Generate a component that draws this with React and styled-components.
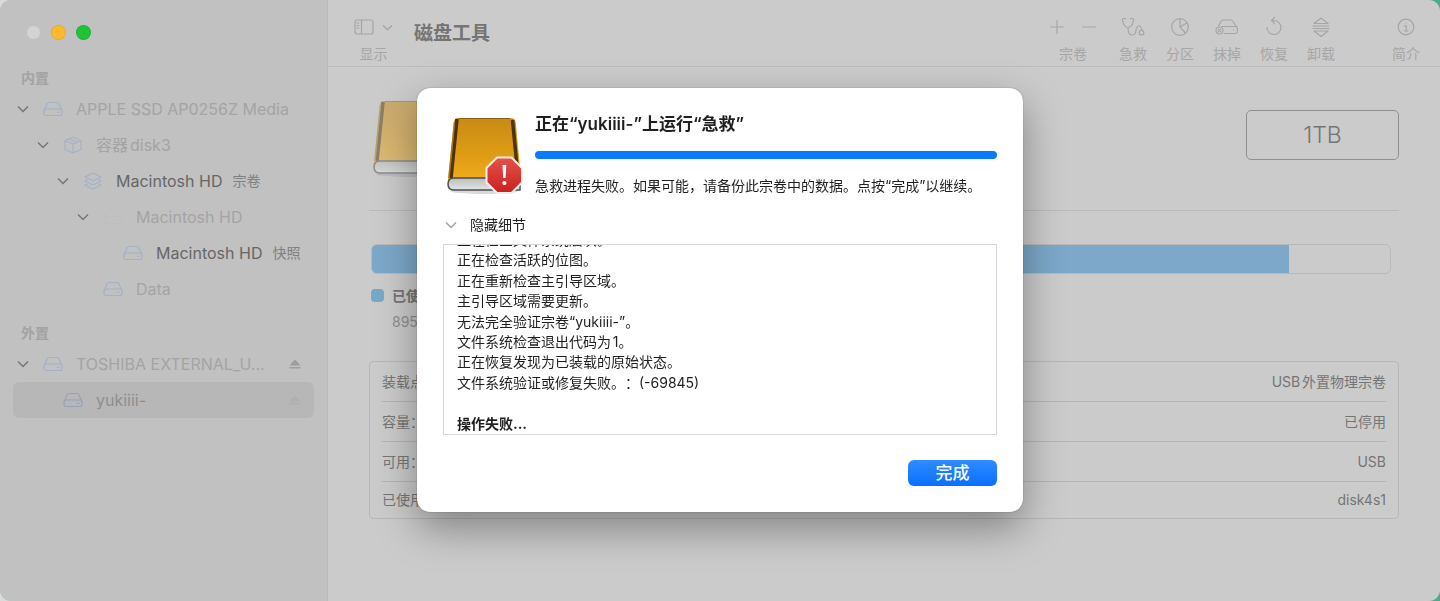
import React from "react";
import styled, { createGlobalStyle } from "styled-components";

const GlobalStyle = createGlobalStyle`
  * {
    box-sizing: border-box;
  }
  body {
    margin: 0;
    background: linear-gradient(90deg, #d9dcda 0%, #4fa98a 60%);
    font-family: Inter, "Noto Sans CJK SC", sans-serif;
    font-size: 14px;
    line-height: 20px;
    text-autospace: normal;
    text-spacing-trim: space-all;
  }
  button {
    padding: 0;
    border: none;
    background: none;
    color: inherit;
    font: inherit;
  }
  ul {
    margin: 0;
    padding: 0;
    list-style: none;
  }
  svg {
    display: block;
    flex: none;
  }
`;

const Window = styled.div`
  display: flex;
  min-height: 100vh;
  border-radius: 11px;
  overflow: hidden;
  background: #cbcbcb;
`;

const Line = styled.svg`
  fill: none;
  stroke: currentColor;
  stroke-width: ${({ $weight }) => $weight || 1.2};
  stroke-linecap: round;
  stroke-linejoin: round;
`;

/* sidebar */

const SidebarBox = styled.aside`
  flex: none;
  width: 328px;
  padding: 25px 13px;
  background: #c1c1c1;
  border-right: 1px solid #b9b9b9;
`;

const Lights = styled.div`
  display: flex;
  gap: 10px;
  padding-left: 13px;
  margin-bottom: 25px;
`;

const Light = styled.button`
  width: 15px;
  height: 15px;
  border-radius: 50%;
  border: 1px solid rgba(0, 0, 0, 0.08);
  background: ${({ $color }) => $color};
`;

const Section = styled.section`
  margin-bottom: 13px;
  h2 {
    margin: 0;
    padding-left: 8px;
    font-size: 14px;
    font-weight: 600;
    line-height: 26px;
    color: #a3a3a3;
  }
`;

const Row = styled.li`
  display: flex;
  align-items: center;
  height: 36px;
  padding-left: ${({ $level }) => 4 + $level * 20}px;
  padding-right: 13px;
  border-radius: 6px;
  background: ${({ $selected }) => ($selected ? "#b7b7b7" : "none")};
  color: ${({ $active, $selected }) =>
    $active ? "#666666" : $selected ? "#8e8e8e" : "#a4a4a4"};
  font-size: 16px;
  white-space: nowrap;

  .toggle {
    width: 12px;
    height: 12px;
    margin-right: 14px;
    color: #7c7c7c;
  }
  .icon {
    width: 20px;
    margin-right: 13px;
    color: ${({ $selected }) => ($selected ? "#94a3b8" : "#a3b2c7")};
  }
  .faint {
    opacity: 0.15;
  }
  .name {
    overflow: hidden;
    text-overflow: ellipsis;
  }
  .kind {
    margin-left: 10px;
    font-size: 14px;
    color: #808080;
  }
  .eject {
    margin-left: auto;
    color: ${({ $selected }) => ($selected ? "#b0b0b0" : "#9d9d9d")};
  }
`;

const Chevron = () => (
  <Line width="12" height="12" viewBox="0 0 12 12" $weight={1.7}>
    <path d="M1.5 4 6 8.5 10.5 4" />
  </Line>
);

const DriveIcon = () => (
  <Line width="20" height="16" viewBox="0 0 20 16">
    <path d="M1.3 9.500 4 3Q4.600 1.500 6 1.500h8q1.400 0 2 1.500l2.700 6.500" />
    <rect x="1" y="8" width="18" height="6.500" rx="2" />
    <path d="M14.500 11.300h1.500" />
  </Line>
);

const ContainerIcon = () => (
  <Line width="20" height="18" viewBox="0 0 20 18">
    <path d="M10 1 18 4.500v9L10 17 2 13.500v-9zM2 4.500 10 8l8-3.500M10 8v9M6 2.800l8 3.500" />
  </Line>
);

const StackIcon = () => (
  <Line width="20" height="18" viewBox="0 0 20 18">
    <path d="M10 1l8 4-8 4-8-4zM4 8 2 9l8 4 8-4-2-1M4 12l-2 1 8 4 8-4-2-1" />
  </Line>
);

const EjectIcon = () => (
  <svg width="12" height="12" viewBox="0 0 12 12" fill="currentColor">
    <path d="M6 1.500 11.500 7.500H.5zM.5 9h11v1.500H.5z" />
  </svg>
);

const icons = {
  drive: DriveIcon,
  container: ContainerIcon,
  stack: StackIcon,
};

const internal = [
  { name: "APPLE SSD AP0256Z Media", level: 0, icon: "drive", open: true },
  { name: "容器disk3", level: 1, icon: "container", open: true },
  { name: "Macintosh HD", kind: "宗卷", level: 2, icon: "stack", open: true, active: true },
  { name: "Macintosh HD", level: 3, icon: "drive", open: true, faint: true },
  { name: "Macintosh HD", kind: "快照", level: 4, icon: "drive", active: true },
  { name: "Data", level: 3, icon: "drive" },
];

const external = [
  { name: "TOSHIBA EXTERNAL_U...", level: 0, icon: "drive", open: true, eject: true },
  { name: "yukiiii-", level: 1, icon: "drive", eject: true, selected: true },
];

const Tree = ({ title, items }) => (
  <Section>
    <h2>{title}</h2>
    <ul>
      {items.map((item, i) => {
        const Icon = icons[item.icon];
        return (
          <Row
            key={i}
            $level={item.level}
            $active={item.active}
            $selected={item.selected}
          >
            {item.open ? (
              <button className="toggle" aria-label="折叠">
                <Chevron />
              </button>
            ) : (
              <span className="toggle" />
            )}
            <span className={item.faint ? "icon faint" : "icon"}>
              <Icon />
            </span>
            <span className="name">{item.name}</span>
            {item.kind && <span className="kind">{item.kind}</span>}
            {item.eject && (
              <button className="eject" aria-label="推出">
                <EjectIcon />
              </button>
            )}
          </Row>
        );
      })}
    </ul>
  </Section>
);

const Sidebar = () => (
  <SidebarBox>
    <Lights>
      <Light $color="#d2d4d4" aria-label="关闭" />
      <Light $color="#fdbb2c" aria-label="最小化" />
      <Light $color="#20c338" aria-label="缩放" />
    </Lights>
    <Tree title="内置" items={internal} />
    <Tree title="外置" items={external} />
  </SidebarBox>
);

/* toolbar */

const ToolbarBox = styled.header`
  display: flex;
  height: 67px;
  padding: 15px 20px 0 26px;
  border-bottom: 1px solid #bcbcbc;
  color: #a6a6a6;

  h1 {
    margin: 0 auto 0 21px;
    font-size: 19px;
    font-weight: 700;
    line-height: 38px;
    color: #747474;
  }
`;

const Tool = styled.div`
  display: flex;
  flex-direction: column;
  align-items: center;
  width: ${({ $wide }) => ($wide ? 54 : 28)}px;
  line-height: 18px;
  white-space: nowrap;

  .glyphs {
    display: flex;
    align-items: center;
    justify-content: center;
    gap: 16px;
    height: 24px;
    margin-bottom: 6px;
  }
`;

const ViewTool = styled(Tool)`
  width: 39px;
  .glyphs {
    gap: 8px;
  }
`;

const Tools = styled.div`
  display: flex;
  gap: 19px;
`;

const Info = styled.div`
  margin-left: 38px;
`;

const ToolButton = ({ label, children }) => (
  <Tool as="button">
    <span className="glyphs">
      <Line width="24" height="24" viewBox="0 0 24 24">
        {children}
      </Line>
    </span>
    {label}
  </Tool>
);

const Toolbar = () => (
  <ToolbarBox>
    <ViewTool as="button">
      <span className="glyphs">
        <Line width="20" height="16" viewBox="0 0 20 16">
          <rect x="1" y="1" width="18" height="14" rx="2" />
          <path d="M7.500 1v14M3 4h2M3 6.500h2M3 9h2" />
        </Line>
        <Line width="11" height="11" viewBox="0 0 12 12" $weight={1.5}>
          <path d="M1.500 4 6 8.500 10.500 4" />
        </Line>
      </span>
      显示
    </ViewTool>
    <h1>磁盘工具</h1>
    <Tools>
      <Tool $wide>
        <span className="glyphs">
          <button aria-label="添加宗卷">
            <Line width="16" height="16" viewBox="0 0 16 16">
              <path d="M8 1.500v13M1.500 8h13" />
            </Line>
          </button>
          <button aria-label="删除宗卷">
            <Line width="16" height="16" viewBox="0 0 16 16">
              <path d="M1.500 8h13" />
            </Line>
          </button>
        </span>
        宗卷
      </Tool>
      <ToolButton label="急救">
        <path d="M4.500 3.500H2.500q-1 0-.8 2Q2.500 12 7 12.500q4.500-.5 5.300-7 .2-2-.8-2h-2M7 12.500Q7 20 11 20q3.500 0 4-4.500t3-4.500q2.500 0 2.500 4.300" />
        <circle cx="20.500" cy="17.700" r="2.300" />
      </ToolButton>
      <ToolButton label="分区">
        <circle cx="12" cy="12" r="8.300" />
        <path d="M12 3.700V12l7-4.300M12 12l5.500 6" />
      </ToolButton>
      <ToolButton label="抹掉">
        <path d="M3.500 11 6 6.500Q6.800 5 8.500 5h7q1.700 0 2.500 1.500L21.500 12M7 11.500h13q2.500 0 2.500 3.500T20 18.500H9.500" />
        <circle cx="4.500" cy="15.500" r="3.500" />
        <path d="m3.200 14.200 2.600 2.600m0-2.600-2.600 2.600M18.500 15h.2" />
      </ToolButton>
      <ToolButton label="恢复">
        <path d="M5 12.500A7 7 0 1 0 12 5.500H9.500M12.500 2.500l-3 3 3 3" />
      </ToolButton>
      <ToolButton label="卸载">
        <path d="M12 3 19 8.500H5zM4 11h16M4 13.500h16M5 16h14l-7 5.500z" />
      </ToolButton>
      <Info>
        <ToolButton label="简介">
          <circle cx="12" cy="12" r="7.800" />
          <path d="M10.500 10.800H12.200V16M10.300 16h3.800M12 8h.1" />
        </ToolButton>
      </Info>
    </Tools>
  </ToolbarBox>
);

/* volume details */

const Main = styled.main`
  flex: 1;
  min-width: 0;
  color: #757575;
`;

const Content = styled.div`
  padding: 32px 41px 0;
`;

const Summary = styled.div`
  display: flex;
  align-items: flex-start;
  justify-content: space-between;
  height: 112px;
  padding-left: 4px;
  border-bottom: 1px solid #bababa;

  .drive {
    opacity: 0.5;
  }
`;

const Capacity = styled.div`
  width: 153px;
  margin-top: 11px;
  border: 1px solid #909090;
  border-radius: 5px;
  font-size: 23px;
  font-weight: 300;
  line-height: 48px;
  text-align: center;
`;

const Usage = styled.div`
  height: 30px;
  margin: 33px 8px 0 2px;
  border: 1px solid #b9b9b9;
  border-radius: 6px;
  background: linear-gradient(#7da8c9, #7da8c9) no-repeat border-box;
  background-size: 90% 100%;
`;

const Legend = styled.div`
  display: flex;
  gap: 8px;
  margin: 12px 0 29px 2px;

  .swatch {
    width: 13px;
    height: 13px;
    margin-top: 3px;
    border-radius: 4px;
    background: #75a9c6;
  }
  strong {
    display: block;
    margin-bottom: 6px;
    font-weight: 600;
  }
  span {
    color: #8f8f8f;
  }
`;

const Details = styled.div`
  padding: 0 12px;
  border: 1px solid #b7b7b7;
  border-radius: 4px;

  table {
    width: 100%;
    border-collapse: separate;
    border-spacing: 0;
  }
  th,
  td {
    height: 40px;
    padding: 0;
    border-bottom: 1px solid #b5b5b5;
    font-weight: 400;
    text-align: left;
  }
  td {
    text-align: right;
  }
  tr:last-child > * {
    height: 36px;
    border-bottom: none;
  }
`;

const details = [
  ["装载点：", "USB外置物理宗卷"],
  ["容量：", "已停用"],
  ["可用：", "USB"],
  ["已使用：", "disk4s1"],
];

/* external disk in a book-like case, seen slightly from above */
const DiskArt = ({ alert }) => (
  <svg className="drive" width="76" height="78" viewBox="0 0 76 78">
    <defs>
      <linearGradient id="cover" x1="0" x2="0" y1="0" y2="1">
        <stop offset="0" stopColor="#c98a17" />
        <stop offset="0.500" stopColor="#dc9a14" />
        <stop offset="1" stopColor="#f2ad1c" />
      </linearGradient>
      <linearGradient id="pages" x1="0" x2="0" y1="0" y2="1">
        <stop offset="0" stopColor="#b9bebb" />
        <stop offset="1" stopColor="#e2e5e3" />
      </linearGradient>
      <linearGradient id="stop" x1="0" x2="0" y1="0" y2="1">
        <stop offset="0" stopColor="#e4524b" />
        <stop offset="1" stopColor="#c9211f" />
      </linearGradient>
    </defs>
    <ellipse cx="37" cy="75" rx="34" ry="3" fill="#000" opacity="0.150" />
    <path d="M11 2h52q5 0 5.600 4L74 61v6H1v-5L7 6q.6-4 4-4z" fill="url(#cover)" />
    <path d="M10 3 4 62" stroke="#4d3204" strokeWidth="3.500" />
    <path d="M7.500 6 2 62" stroke="#a8741a" strokeWidth="1.500" />
    <path d="M65.500 4 71 61" stroke="#4d3204" strokeWidth="3.500" />
    <path d="M12 2.500h51" stroke="#8c5f10" />
    <path d="M7 62h66v12H7q-6 0-6-6t6-6z" fill="url(#pages)" stroke="#4c4f4d" strokeWidth="1.500" />
    {alert && (
      <g>
        <path
          d="M50 41.500h14.500L75 52v14.500L64.500 77H50L39.500 66.500V52z"
          fill="url(#stop)"
          stroke="#f6eeee"
          strokeWidth="2"
          strokeLinejoin="round"
        />
        <path d="M55.500 49h3.800l-.7 13h-2.400z" fill="#fff" />
        <circle cx="57.400" cy="67" r="2.100" fill="#fff" />
      </g>
    )}
  </svg>
);

const Volume = () => (
  <Content>
    <Summary>
      <DiskArt />
      <Capacity>1TB</Capacity>
    </Summary>
    <Usage />
    <Legend>
      <i className="swatch" />
      <div>
        <strong>已使用</strong>
        <span>895</span>
      </div>
    </Legend>
    <Details>
      <table>
        <tbody>
          {details.map(([label, value]) => (
            <tr key={label}>
              <th scope="row">{label}</th>
              <td>{value}</td>
            </tr>
          ))}
        </tbody>
      </table>
    </Details>
  </Content>
);

/* first aid sheet */

const Overlay = styled.div`
  position: fixed;
  inset: 0;
  display: flex;
  align-items: flex-start;
  justify-content: center;
  padding-top: 88px;
`;

const Sheet = styled.div`
  width: 606px;
  padding: 26px;
  border-radius: 13px;
  background: #fff;
  box-shadow: 0 0 1px rgba(0, 0, 0, 0.6), 0 16px 40px rgba(0, 0, 0, 0.36);
  color: #1f1f1f;
`;

const SheetHead = styled.div`
  display: flex;
  align-items: center;
  gap: 12px;
  padding-left: 4px;

  .text {
    display: flex;
    flex: 1;
    flex-direction: column;
    gap: 17px;
    min-width: 0;
  }
  h2,
  p {
    margin: 0;
    white-space: nowrap;
  }
  h2 {
    font-size: 17px;
    font-weight: 600;
    line-height: 20px;
  }
`;

const Progress = styled.progress`
  display: block;
  width: 100%;
  height: 8px;
  appearance: none;
  border: none;
  border-radius: 4px;
  overflow: hidden;
  &::-webkit-progress-bar {
    background: #e4e4e4;
  }
  &::-webkit-progress-value {
    background: #0a7aff;
  }
`;

const Disclosure = styled.button`
  display: flex;
  align-items: center;
  gap: 13px;
  margin: 19px 0 9px;
  padding-left: 2px;
  svg {
    color: #a8a8a8;
  }
`;

const Log = styled.div`
  display: flex;
  align-items: flex-end;
  height: 191px;
  padding: 0 13px;
  border: 1px solid #d6d6d6;
  overflow: hidden;

  ul {
    display: grid;
    grid-auto-rows: 1fr;
    height: 204px;
  }
  .result {
    font-weight: 700;
  }
`;

const Actions = styled.div`
  display: flex;
  justify-content: flex-end;
  margin-top: 25px;
`;

const DoneButton = styled.button`
  width: 89px;
  height: 26px;
  border-radius: 6px;
  background: linear-gradient(#2f8bff, #0a6fff);
  color: #fff;
  font-size: 17px;
  font-weight: 500;
  line-height: 24px;
`;

const log = [
  "正在检查文件系统层次。",
  "正在检查活跃的位图。",
  "正在重新检查主引导区域。",
  "主引导区域需要更新。",
  "无法完全验证宗卷“yukiiii-”。",
  "文件系统检查退出代码为1。",
  "正在恢复发现为已装载的原始状态。",
  "文件系统验证或修复失败。：(-69845)",
  "",
];

const FirstAid = () => (
  <Overlay>
    <Sheet role="dialog" aria-labelledby="sheet-title">
      <SheetHead>
        <DiskArt alert />
        <div className="text">
          <h2 id="sheet-title">正在“yukiiii-”上运行“急救”</h2>
          <Progress value={100} max={100} aria-labelledby="sheet-title" />
          <p>急救进程失败。如果可能，请备份此宗卷中的数据。点按“完成”以继续。</p>
        </div>
      </SheetHead>
      <Disclosure aria-expanded="true">
        <Chevron />
        隐藏细节
      </Disclosure>
      <Log>
        <ul>
          {log.map((text, i) => (
            <li key={i}>{text}</li>
          ))}
          <li className="result">操作失败...</li>
        </ul>
      </Log>
      <Actions>
        <DoneButton>完成</DoneButton>
      </Actions>
    </Sheet>
  </Overlay>
);

const App = () => (
  <>
    <GlobalStyle />
    <Window>
      <Sidebar />
      <Main>
        <Toolbar />
        <Volume />
      </Main>
    </Window>
    <FirstAid />
  </>
);

export default App;
